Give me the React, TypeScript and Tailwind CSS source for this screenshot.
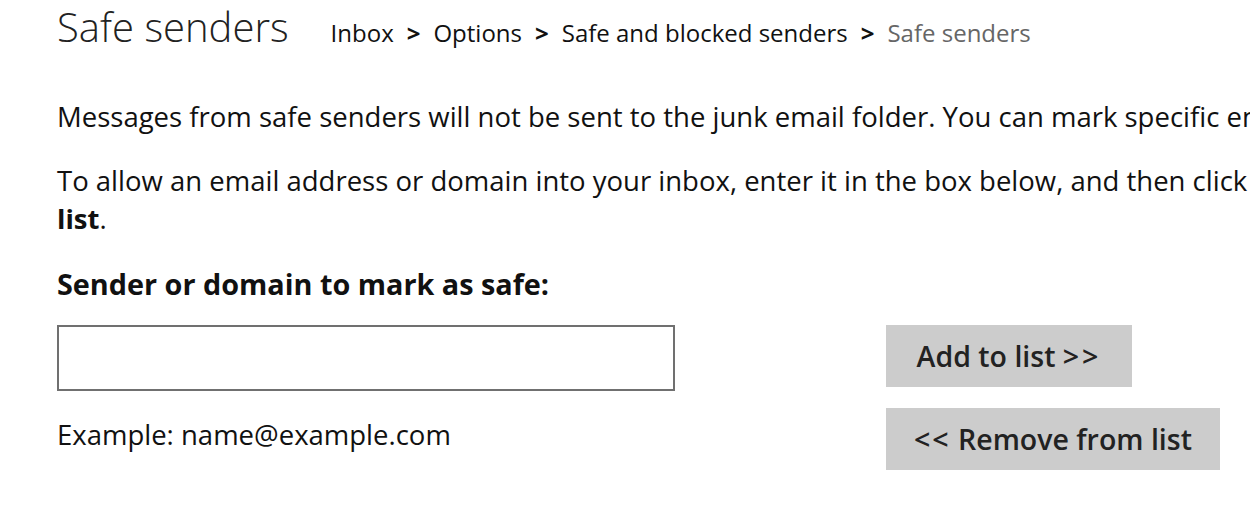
const crumbs = ['Inbox', 'Options', 'Safe and blocked senders'];

const font = { fontFamily: '"Open Sans", "Noto Sans", sans-serif' };

const App = () => {
  return (
    <div className="w-[1250px] h-[511px] overflow-hidden bg-white text-[#111] pl-[57px]" style={font}>
      <div className="flex items-baseline h-[52px] pt-[5px] whitespace-nowrap">
        <h1 className="text-[40px] leading-[44px] font-light text-[#222]">Safe senders</h1>
        <nav className="flex items-baseline ml-[42px] text-[24px] text-[#111]">
          {crumbs.map((c) => (
            <span key={c} className="flex items-baseline">
              <span>{c}</span>
              <span className="font-bold mx-[13px]">&gt;</span>
            </span>
          ))}
          <span className="text-[#666]">Safe senders</span>
        </nav>
      </div>

      <p className="mt-[46px] text-[27.5px] leading-[38px] whitespace-nowrap">
        Messages from safe senders will not be sent to the junk email folder. You can mark specific email addresses or domains as safe.
      </p>
      <p className="mt-[26px] text-[27.5px] leading-[38px] whitespace-nowrap">
        To allow an email address or domain into your inbox, enter it in the box below, and then click <b>Add to</b>
        <br />
        <b>list</b>.
      </p>

      <h2 className="mt-[27px] text-[28.8px] leading-[38px] font-bold">Sender or domain to mark as safe:</h2>

      <div className="flex mt-[22px]">
        <div className="flex flex-col">
          <input
            type="text"
            className="w-[618px] h-[66px] border-2 border-[#707070] bg-white outline-none px-3 text-[27px]"
          />
          <div className="mt-[25px] text-[27.5px] leading-[38px] whitespace-nowrap">Example: name@example.com</div>
        </div>
        <div className="flex flex-col items-start gap-[21px] ml-[211px]">
          <button className="w-[246px] h-[62px] bg-[#cccccc] text-[28.5px] font-semibold text-[#222] whitespace-nowrap">
            Add to list <span className="tracking-[3px]">&gt;&gt;</span>
          </button>
          <button className="w-[334px] h-[62px] bg-[#cccccc] text-[28.5px] font-semibold text-[#222] whitespace-nowrap">
            <span className="tracking-[2px]">&lt;&lt;</span> Remove from list
          </button>
        </div>
      </div>
    </div>
  );
};

export default App;
